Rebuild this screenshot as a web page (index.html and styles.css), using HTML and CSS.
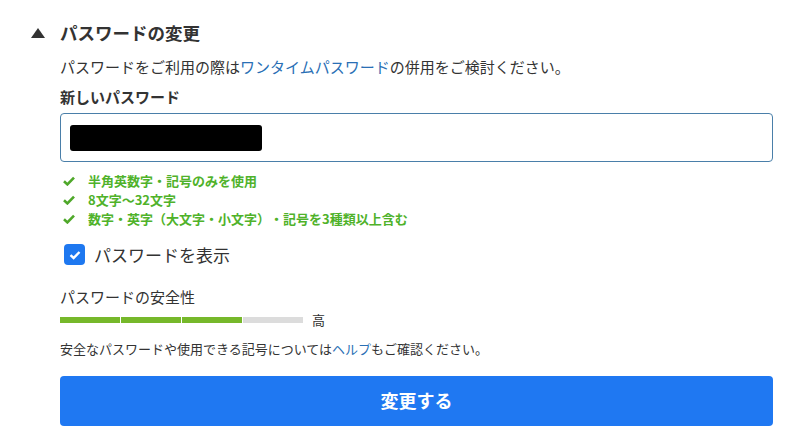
FILE: index.html
```html
<!DOCTYPE html>
<html lang="ja">
<head>
  <meta charset="UTF-8" />
  <meta name="viewport" content="width=device-width, initial-scale=1.0"/>
  <title>パスワードの変更</title>
  <link rel="stylesheet" href="styles.css">
</head>
<body>
  <section class="panel">
    <h2 class="panel-title"><span class="toggle"></span>パスワードの変更</h2>
    <div class="panel-body">
      <p class="lead">パスワードをご利用の際は<a href="#">ワンタイムパスワード</a>の併用をご検討ください。</p>
      <label class="field-label" for="newPass">新しいパスワード</label>
      <div class="input-box" id="newPass"><span class="masked"></span></div>
      <ul class="rules">
        <li><svg viewBox="0 0 12 10"><path d="M1 5.2 L4.4 8.4 L11 1.6" /></svg>半角英数字・記号のみを使用</li>
        <li><svg viewBox="0 0 12 10"><path d="M1 5.2 L4.4 8.4 L11 1.6" /></svg>8文字～32文字</li>
        <li><svg viewBox="0 0 12 10"><path d="M1 5.2 L4.4 8.4 L11 1.6" /></svg>数字・英字（大文字・小文字）・記号を3種類以上含む</li>
      </ul>
      <div class="show-pass">
        <span class="checkbox"><svg viewBox="0 0 12 10"><path d="M1.5 5.2 L4.6 8 L10.5 2" /></svg></span>
        パスワードを表示
      </div>
      <div class="strength-label">パスワードの安全性</div>
      <div class="strength">
        <div class="bar">
          <span class="seg on"></span><span class="seg on"></span><span class="seg on"></span><span class="seg"></span>
        </div>
        <span class="level">高</span>
      </div>
      <p class="help">安全なパスワードや使用できる記号については<a href="#">ヘルプ</a>もご確認ください。</p>
      <button class="submit">変更する</button>
    </div>
  </section>
</body>
</html>
```

FILE: styles.css
```css
body {
  margin: 0;
  background: #fff;
  color: #333;
  font-family: "Noto Sans CJK JP", "Noto Sans", sans-serif;
  text-spacing-trim: space-all;
}
a { color: #2a6fb5; text-decoration: none; }
.panel { padding: 21px 36px 0 31px; }
.panel-title {
  display: flex;
  align-items: center;
  margin: 0;
  font-size: 17.5px;
  line-height: 24px;
  font-weight: bold;
  color: #333;
}
.toggle {
  width: 0;
  height: 0;
  border-left: 7px solid transparent;
  border-right: 7px solid transparent;
  border-bottom: 10px solid #333;
  margin-right: 15px;
}
.panel-body { padding-left: 29px; }
.lead {
  margin: 11px 0 0;
  font-size: 15px;
  line-height: 22px;
}
.field-label {
  display: block;
  margin-top: 8px;
  font-size: 15px;
  line-height: 22px;
  font-weight: bold;
}
.input-box {
  margin-top: 5px;
  height: 47px;
  border: 1px solid #4a7fa9;
  border-radius: 4px;
  display: flex;
  align-items: center;
  padding-left: 9px;
}
.masked {
  width: 192px;
  height: 26px;
  background: #000;
  border-radius: 3px;
}
.rules {
  list-style: none;
  margin: 9px 0 0;
  padding: 0;
}
.rules li {
  display: flex;
  align-items: center;
  font-size: 13px;
  line-height: 19px;
  font-weight: bold;
  color: #4fb22a;
}
.rules svg {
  width: 12px;
  height: 10px;
  margin: 0 13px 0 3px;
  fill: none;
  stroke: #4fa82a;
  stroke-width: 2.6;
}
.show-pass {
  display: flex;
  align-items: center;
  margin-top: 16px;
  font-size: 17px;
  line-height: 21px;
  color: #333;
}
.checkbox {
  width: 21px;
  height: 21px;
  border-radius: 4px;
  background: #1e78f0;
  display: flex;
  align-items: center;
  justify-content: center;
  margin: 0 9px 0 4px;
}
.checkbox svg {
  width: 12px;
  height: 10px;
  fill: none;
  stroke: #fff;
  stroke-width: 2.4;
}
.strength-label {
  margin-top: 21px;
  font-size: 15px;
  line-height: 22px;
}
.strength {
  display: flex;
  align-items: center;
  margin-top: 3px;
  height: 18px;
}
.bar { display: flex; gap: 1px; }
.seg {
  width: 60px;
  height: 6px;
  background: #dcdcdc;
}
.seg.on { background: #76b82a; }
.level {
  margin-left: 9px;
  font-size: 13px;
  line-height: 18px;
}
.help {
  margin: 10px 0 0;
  font-size: 13px;
  line-height: 20px;
}
.submit {
  display: block;
  width: 100%;
  height: 50px;
  margin-top: 17px;
  padding-bottom: 3px;
  border: none;
  border-radius: 4px;
  background: #1f78f2;
  color: #fff;
  font-family: "Noto Sans CJK JP", "Noto Sans", sans-serif;
  font-size: 18px;
  font-weight: bold;
}
```
